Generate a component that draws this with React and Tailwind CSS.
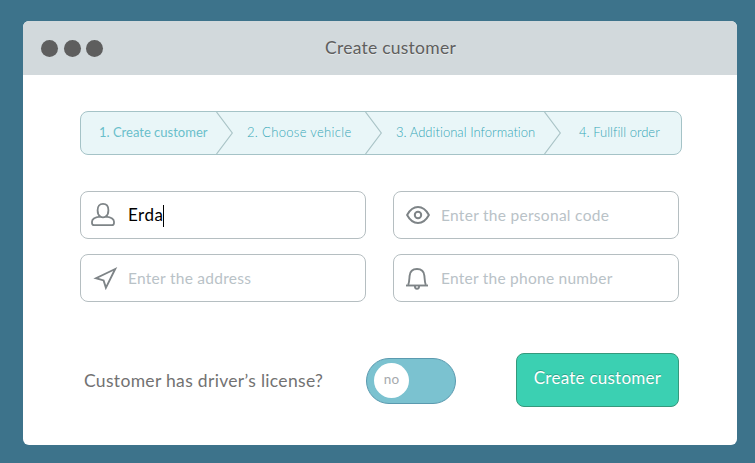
import React from "react";

function Divider() {
  return (
    <svg className="h-[42px] w-[17px] shrink-0" viewBox="0 0 17 42" fill="none" stroke="#a9c3c6" strokeWidth="1.2">
      <path d="M0.5 0 L16.3 21 L0.5 42" />
    </svg>
  );
}

function PersonIcon() {
  return (
    <svg className="h-[26px] w-[26px]" viewBox="0 0 26 26" fill="none" stroke="#7e8487" strokeWidth="1.8" strokeLinejoin="round">
      <path d="M10.2 14.4 C8.2 13 7.6 10.8 7.6 8.2 C7.6 4.2 9.6 1.9 13 1.9 C16.4 1.9 18.4 4.2 18.4 8.2 C18.4 10.8 17.8 13 15.8 14.4" />
      <path d="M10.2 14.6 C4.4 15.2 2 16.8 2 19.8 V20.9 Q2 23.1 4.2 23.1 H21.8 Q24 23.1 24 20.9 V19.8 C24 16.8 21.6 15.2 15.8 14.6 Q13 16 10.2 14.6 Z" />
    </svg>
  );
}

function EyeIcon() {
  return (
    <svg className="h-[26px] w-[26px]" viewBox="0 0 26 26" fill="none" stroke="#7e8487" strokeWidth="2" strokeLinejoin="round">
      <path d="M2.1 13 C4.8 8 8.6 5 13 5 C17.4 5 21.2 8 23.9 13 C21.2 18 17.4 21 13 21 C8.6 21 4.8 18 2.1 13 Z" />
      <circle cx="13" cy="13" r="3.2" />
    </svg>
  );
}

function SendIcon() {
  return (
    <svg className="h-[26px] w-[26px]" viewBox="0 0 26 26" fill="none" stroke="#7e8487" strokeWidth="1.9" strokeLinejoin="miter">
      <path d="M23.2 4 L4 13.2 L11.6 15.4 L13.9 22.8 Z" />
    </svg>
  );
}

function BellIcon() {
  return (
    <svg className="h-[26px] w-[26px]" viewBox="0 0 26 26" fill="none" stroke="#7e8487" strokeWidth="1.9">
      <path d="M2 20.5 H24" />
      <path d="M4.2 20 C5.3 17.5 5.3 14.5 5.6 10.8 C6 6.4 8.6 4 13 4 C17.4 4 20 6.4 20.4 10.8 C20.7 14.5 20.7 17.5 21.8 20" />
      <path d="M10.8 20.6 C10.8 25 15.2 25 15.2 20.6" />
    </svg>
  );
}

function Field({ icon, children }) {
  return (
    <div className="flex h-12 w-[286px] items-center rounded-lg border border-[#b5bec1] bg-white pl-[9px]">
      {icon}
      {children}
    </div>
  );
}

export default function App() {
  return (
    <div className="h-[463px] w-[755px] bg-[#3d738b] pl-[23px] pt-[21px] font-['Lato',sans-serif]">
      <div className="h-[424px] w-[714px] overflow-hidden rounded-md bg-white">
        <header className="flex h-[54px] items-center bg-[#d2d9dc] pl-[18px]">
          <div className="flex gap-[5.5px]">
            <span className="size-[17px] rounded-full bg-[#5e5e5e]" />
            <span className="size-[17px] rounded-full bg-[#5e5e5e]" />
            <span className="size-[17px] rounded-full bg-[#5e5e5e]" />
          </div>
          <h1 className="ml-[222px] whitespace-nowrap text-[17.5px] tracking-[0.25px] text-[#5f5f5f] [text-shadow:0_1px_0_#e6eaeb]">Create customer</h1>
        </header>

        <main className="pl-[57px] pt-9">
          <nav className="flex h-11 w-[602px] items-center whitespace-nowrap rounded-lg border border-[#a5c3c7] bg-[#e9f6f8] text-[13px] font-light text-[#35a6b7]">
            <span className="w-[135px] pl-[18px] font-normal text-[#69bfcb]">1. Create customer</span>
            <Divider />
            <span className="w-[132px] pl-[14px] tracking-[0.32px]">2. Choose vehicle</span>
            <Divider />
            <span className="w-[162px] pl-[14px] tracking-[0.03px]">3. Additional Information</span>
            <Divider />
            <span className="pl-[18px] tracking-[0.02px]">4. Fullfill order</span>
          </nav>

          <div className="mt-9 grid w-[599px] grid-cols-[286px_286px] gap-x-[27px] gap-y-[15px] whitespace-nowrap text-[15.5px] text-[#b9c2c7]">
            <Field icon={<PersonIcon />}>
              <span className="ml-3 text-[17px] tracking-[0.5px] text-black">Erda</span>
              <span className="mt-[2px] h-[22px] w-px bg-black" />
            </Field>
            <Field icon={<span className="ml-[2px]"><EyeIcon /></span>}>
              <span className="ml-[10px] mt-px tracking-[0.29px]">Enter the personal code</span>
            </Field>
            <Field icon={<span className="ml-[2px]"><SendIcon /></span>}>
              <span className="ml-[10px] mt-px tracking-[0.27px]">Enter the address</span>
            </Field>
            <Field icon={<span className="ml-[1px]"><BellIcon /></span>}>
              <span className="ml-[11px] mt-px tracking-[0.25px]">Enter the phone number</span>
            </Field>
          </div>

          <div className="mt-[51px] flex h-[54px] items-center">
            <p className="mt-[2px] w-[286px] whitespace-nowrap pl-1 text-[17.5px] tracking-[0.32px] text-[#727272]">Customer has driver’s license?</p>
            <div className="mt-[2px] flex h-[46px] w-[90px] items-center rounded-full border border-[#5b9aaf] bg-[#7bc2d0] pl-[7px]">
              <span className="mb-[2px] flex size-[35px] items-center justify-center rounded-full bg-white pb-[1px] text-[13.5px] tracking-[0.2px] text-[#a6aaad]">no</span>
            </div>
            <button className="ml-[60px] h-[54px] w-[163px] whitespace-nowrap rounded-lg border border-[#35997c] bg-[#3bd0b2] pb-[4px] text-[17px] tracking-[0.25px] text-white [text-shadow:0_-1px_0_#2fa38b]">Create customer</button>
          </div>
        </main>
      </div>
    </div>
  );
}
